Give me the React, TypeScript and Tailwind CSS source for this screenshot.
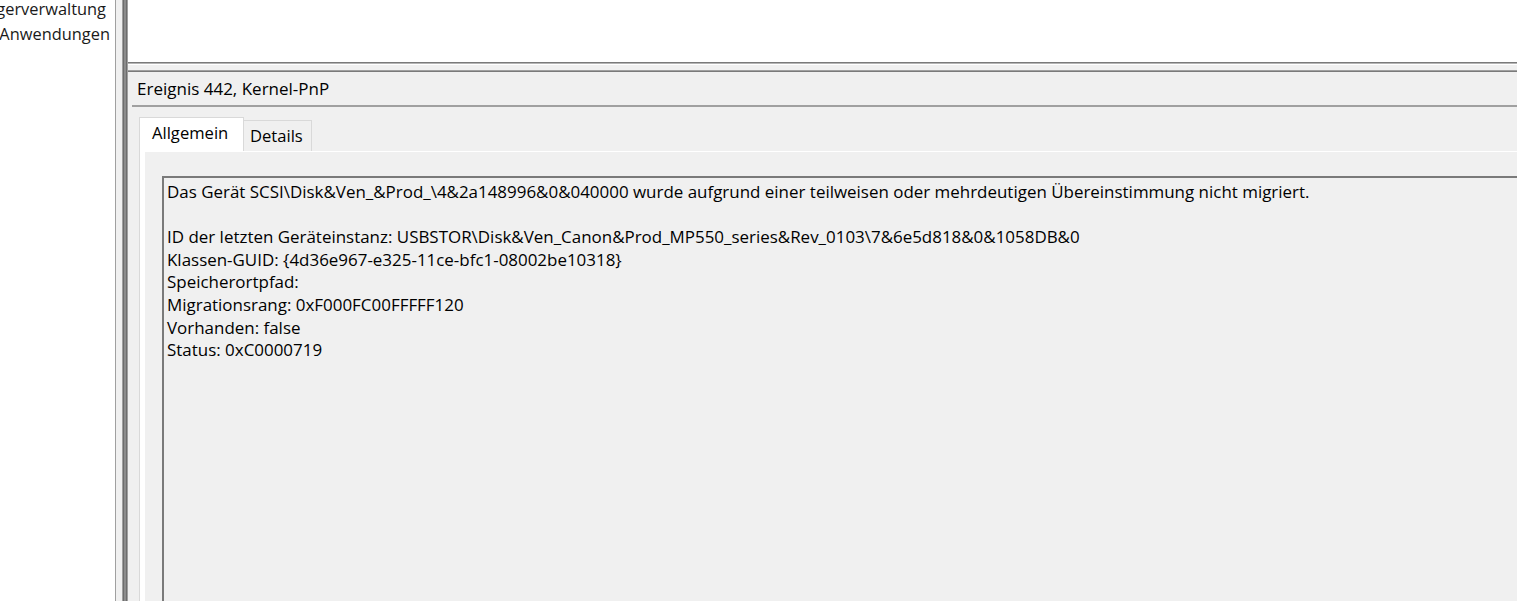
import React from "react";

const lines = [
  "Das Gerät SCSI\\Disk&Ven_&Prod_\\4&2a148996&0&040000 wurde aufgrund einer teilweisen oder mehrdeutigen Übereinstimmung nicht migriert.",
  "",
  "ID der letzten Geräteinstanz: USBSTOR\\Disk&Ven_Canon&Prod_MP550_series&Rev_0103\\7&6e5d818&0&1058DB&0",
  "Klassen-GUID: {4d36e967-e325-11ce-bfc1-08002be10318}",
  "Speicherortpfad:",
  "Migrationsrang: 0xF000FC00FFFFF120",
  "Vorhanden: false",
  "Status: 0xC0000719",
];

export default function App() {
  return (
    <div className="w-[1517px] h-[601px] overflow-hidden flex bg-white text-[#000] font-['Segoe_UI','Open_Sans',sans-serif]">
      {/* left tree pane */}
      <div className="w-[115px] shrink-0 bg-white overflow-hidden text-[16.4px] leading-[25px] text-[#1a1a1a]">
        <div className="flex justify-end pr-[9px] whitespace-nowrap -mt-[4px]">gerverwaltung</div>
        <div className="flex justify-end pr-[5px] whitespace-nowrap">Anwendungen</div>
      </div>
      {/* vertical splitter */}
      <div className="w-[13px] shrink-0 flex">
        <div className="w-px bg-[#a0a0a0]" />
        <div className="w-[6px] bg-[#f0f0f0]" />
        <div className="w-px bg-[#a0a0a0]" />
        <div className="w-px bg-[#6d6d6d]" />
        <div className="w-[2px] bg-[#8c8c8c]" />
        <div className="w-px bg-[#6d6d6d]" />
        <div className="w-px bg-[#a0a0a0]" />
      </div>
      {/* right */}
      <div className="flex-1 flex flex-col min-w-0">
        <div className="h-[62px] bg-white shrink-0" />
        <div className="h-px bg-[#7a7a7a] shrink-0" />
        <div className="h-px bg-[#b4b4b4] shrink-0" />
        <div className="h-[6px] bg-[#f0f0f0] shrink-0 border-t border-white" />
        <div className="h-px bg-[#a0a0a0] shrink-0" />
        <div className="h-px bg-[#7a7a7a] shrink-0" />
        <div className="flex-1 bg-[#f0f0f0] flex flex-col">
          <div className="h-[33px] pl-[9px] flex items-center text-[17px]">Ereignis 442, Kernel-PnP</div>
          <div className="ml-[4px] h-[2px] bg-[#a0a0a0] shrink-0" />
          <div className="ml-[11px] mt-[10px] flex items-end h-[34px] text-[16.6px] shrink-0">
            <div className="w-[105px] h-[34px] bg-white border border-b-0 border-[#d9d9d9] pl-[12px] flex items-center pb-[2px]">Allgemein</div>
            <div className="w-[68px] h-[31px] border-t border-r border-[#d9d9d9] pl-[6px] flex items-center pt-[1px]">Details</div>
          </div>
          <div className="ml-[11px] flex-1 bg-white border-l border-[#d9d9d9] pl-[5px] pt-px flex flex-col">
            <div className="flex-1 bg-[#f0f0f0] pl-[17px] pt-[24px] flex flex-col">
              <div className="flex-1 border-l-2 border-t-2 border-l-[#7a7a7a] border-t-[#7a7a7a] bg-[#f0f0f0] pl-[3px] pt-[3px] text-[16.95px] leading-[22.6px] whitespace-pre">
                {lines.map((l, i) => (
                  <div key={i} className="h-[22.6px]">{l}</div>
                ))}
              </div>
            </div>
          </div>
        </div>
      </div>
    </div>
  );
}
